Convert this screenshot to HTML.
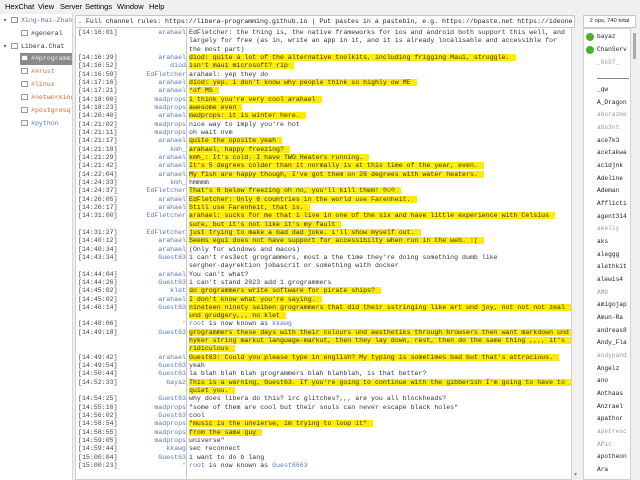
<!DOCTYPE html>
<html><head><meta charset="utf-8"><style>
*{margin:0;padding:0;box-sizing:border-box}
body{width:640px;height:480px;overflow:hidden;background:#f0f0f0;font-family:"Liberation Sans",sans-serif;position:relative}
.menu{position:absolute;top:0;left:0;height:14px;width:640px;font-size:7.5px;color:#000}
.menu span{position:absolute;top:2px}
.tree{position:absolute;left:0;top:14px;width:73px;height:466px;background:#fff;border-right:1px solid #d8d8d8;font-family:"Liberation Mono",monospace;font-size:6.6px;overflow:hidden}
.ti{position:absolute;height:12px;line-height:12px;white-space:nowrap}
.ic{display:inline-block;width:7px;height:6px;border:1px solid #999;vertical-align:middle;margin-right:3px;background:#fafafa}
.topic{position:absolute;left:75px;top:15px;width:500px;height:13px;background:#fff;border:1px solid #c8c8c8;font-family:"Liberation Mono",monospace;font-size:6.6px;line-height:11px;padding-left:2px;white-space:nowrap;overflow:hidden;color:#222}
.ops{position:absolute;left:583px;top:15px;width:53px;height:13px;background:#fff;border:1px solid #c8c8c8;font-size:5.8px;line-height:11px;text-align:center;color:#222}
.chat{position:absolute;left:75px;top:28px;width:497px;height:452px;background:#fff;border:1px solid #d0d0d0;border-top:none;font-family:"Liberation Mono",monospace;font-size:6.6px;color:#333;overflow:hidden}
.sep{position:absolute;left:110px;top:0;width:1px;height:452px;background:#c8c8c8}
.rows{position:absolute;left:0;top:1px;width:497px}
.r{height:8.33px;line-height:8.33px;white-space:nowrap;position:relative}
.t{position:absolute;left:2px;color:#444}
.n{position:absolute;right:387px;color:#5a78b0;text-align:right}
.m{position:absolute;left:113px}
.h{background:#ffec00;padding-right:6px}
.b{color:#5a78b0}
.vs{position:absolute;left:572px;top:28px;width:10px;height:452px;background:#f0f0f0}
.users{position:absolute;left:583px;top:28px;width:48px;height:452px;background:#fff;border:1px solid #d0d0d0;font-family:"Liberation Mono",monospace;font-size:6.2px;color:#222;overflow:hidden}
.u{position:absolute;left:13px;white-space:nowrap}
.g{color:#999}
.dot{position:absolute;left:2px;width:8px;height:8px;border-radius:50%;background:#4caf2a}
.us{position:absolute;left:631px;top:28px;width:9px;height:452px;background:#f0f0f0}
</style></head><body>
<div class="menu"><span style="left:5px">HexChat</span><span style="left:38px">View</span><span style="left:60px">Server</span><span style="left:85px">Settings</span><span style="left:117px">Window</span><span style="left:149px">Help</span></div>
<div class="tree">
<div class="ti" style="top:1px;left:3px;color:#5a78b0"><span style="color:#444">▾ </span><span class="ic"></span>Xing-Hai-Zhang</div>
<div class="ti" style="top:14px;left:21px;color:#333"><span class="ic"></span>#general</div>
<div class="ti" style="top:27px;left:3px;color:#333"><span style="color:#444">▾ </span><span class="ic"></span>Libera.Chat</div>
<div class="ti" style="top:39px;left:20px;width:53px;background:#8a8a8a;color:#eee;padding-left:1px"><span class="ic"></span>##programming</div>
<div class="ti" style="top:52px;left:21px;color:#d06a30"><span class="ic"></span>##rust</div>
<div class="ti" style="top:65px;left:21px;color:#d06a30"><span class="ic"></span>#linux</div>
<div class="ti" style="top:78px;left:21px;color:#d06a30"><span class="ic"></span>#networking</div>
<div class="ti" style="top:91px;left:21px;color:#d06a30"><span class="ic"></span>#postgresql</div>
<div class="ti" style="top:104px;left:21px;color:#5a78b0"><span class="ic"></span>#python</div>
</div>
<div class="topic">. Full channel rules: https://libera-programming.github.io | Put pastes in a pastebin, e.g. https://bpaste.net https://ideone.com</div>
<div class="ops">2 ops, 740 total</div>
<div class="chat"><div class="sep"></div><div class="rows">
<div class="r"><span class="t">[14:16:01]</span><span class="n">arahael</span><span class="m">EdFletcher: the thing is, the native frameworks for ios and android both support this well, and</span></div>
<div class="r"><span class="m">largely for free (as in, write an app in it, and it is already localisable and accessible for</span></div>
<div class="r"><span class="m">the most part)</span></div>
<div class="r"><span class="t">[14:16:39]</span><span class="n">arahael</span><span class="m"><span class="h">diod: quite a lot of the alternative toolkits, including frigging Maui, struggle.</span></span></div>
<div class="r"><span class="t">[14:16:52]</span><span class="n">diod</span><span class="m"><span class="h">isn't maui microsoft? rip</span></span></div>
<div class="r"><span class="t">[14:16:59]</span><span class="n">EdFletcher</span><span class="m">arahael: yep they do</span></div>
<div class="r"><span class="t">[14:17:16]</span><span class="n">arahael</span><span class="m"><span class="h">diod: yep. i don't know why people think so highly ow ME</span></span></div>
<div class="r"><span class="t">[14:17:21]</span><span class="n">arahael</span><span class="m"><span class="h">*of MS</span></span></div>
<div class="r"><span class="t">[14:18:00]</span><span class="n">madprops</span><span class="m"><span class="h">i think you're very cool arahael</span></span></div>
<div class="r"><span class="t">[14:18:23]</span><span class="n">madprops</span><span class="m"><span class="h">awesome even</span></span></div>
<div class="r"><span class="t">[14:20:40]</span><span class="n">arahael</span><span class="m"><span class="h">madprops: it is winter here.</span></span></div>
<div class="r"><span class="t">[14:21:02]</span><span class="n">madprops</span><span class="m">nice way to imply you're hot</span></div>
<div class="r"><span class="t">[14:21:11]</span><span class="n">madprops</span><span class="m">oh wait nvm</span></div>
<div class="r"><span class="t">[14:21:17]</span><span class="n">arahael</span><span class="m"><span class="h">quite the oposite yeah</span></span></div>
<div class="r"><span class="t">[14:21:18]</span><span class="n">kmh_</span><span class="m"><span class="h">arahael,  happy freezing?</span></span></div>
<div class="r"><span class="t">[14:21:29]</span><span class="n">arahael</span><span class="m"><span class="h">kmh_: It's cold. I have TWO Heaters running.</span></span></div>
<div class="r"><span class="t">[14:21:42]</span><span class="n">arahael</span><span class="m"><span class="h">It's 5 degrees colder than it normally is at this time of the year, even.</span></span></div>
<div class="r"><span class="t">[14:22:04]</span><span class="n">arahael</span><span class="m"><span class="h">My fish are happy though, I've got them on 26 degrees with water heaters.</span></span></div>
<div class="r"><span class="t">[14:24:33]</span><span class="n">kmh_</span><span class="m">hmmmm</span></div>
<div class="r"><span class="t">[14:24:37]</span><span class="n">EdFletcher</span><span class="m"><span class="h">That's 6 below freezing oh no, you'll kill them! ☹☺☹</span></span></div>
<div class="r"><span class="t">[14:26:05]</span><span class="n">arahael</span><span class="m"><span class="h">EdFletcher: Only 6 countries in the world use Farenheit.</span></span></div>
<div class="r"><span class="t">[14:26:17]</span><span class="n">arahael</span><span class="m"><span class="h">Still use Farenheit, that is.</span></span></div>
<div class="r"><span class="t">[14:31:00]</span><span class="n">EdFletcher</span><span class="m"><span class="h">arahael: sucks for me that i live in one of the six and have little experience with Celsius</span></span></div>
<div class="r"><span class="m"><span class="h">sure, but it's not like it's my fault</span></span></div>
<div class="r"><span class="t">[14:31:27]</span><span class="n">EdFletcher</span><span class="m"><span class="h">just trying to make a bad dad joke. i'll show myself out.</span></span></div>
<div class="r"><span class="t">[14:40:12]</span><span class="n">arahael</span><span class="m"><span class="h">Seems egui does not have support for accessibilty when run in the web. :(</span></span></div>
<div class="r"><span class="t">[14:40:34]</span><span class="n">arahael</span><span class="m">(Only for windows and macos)</span></div>
<div class="r"><span class="t">[14:43:34]</span><span class="n">Guest63</span><span class="m">i can't res3ect grogrammers, most a the time they're doing something dumb like</span></div>
<div class="r"><span class="m">sergher-dayrektion jobascrit or something with docker</span></div>
<div class="r"><span class="t">[14:44:04]</span><span class="n">arahael</span><span class="m">You can't what?</span></div>
<div class="r"><span class="t">[14:44:26]</span><span class="n">Guest63</span><span class="m">i can't stand 2023 add 1 grogrammers</span></div>
<div class="r"><span class="t">[14:45:02]</span><span class="n">klet</span><span class="m"><span class="h">do grogrammers write software for pirate ships?</span></span></div>
<div class="r"><span class="t">[14:45:02]</span><span class="n">arahael</span><span class="m"><span class="h">I don't know what you're saying.</span></span></div>
<div class="r"><span class="t">[14:46:14]</span><span class="n">Guest63</span><span class="m"><span class="h"> nineteen ninety seiben grogrammers that did their sstringing like art und joy, not not not zeal</span></span></div>
<div class="r"><span class="m"><span class="h">und grudgery,,, no klet</span></span></div>
<div class="r"><span class="t">[14:48:06]</span><span class="n" style="color:#e0a040">*</span><span class="m"><span class="b">root</span> is now known as <span class="b">kkawg</span></span></div>
<div class="r"><span class="t">[14:49:18]</span><span class="n">Guest63</span><span class="m"><span class="h">grogrammers these days with their colours und aesthetiks through browsers then want markdown und</span></span></div>
<div class="r"><span class="m"><span class="h">hyker string markut language-markut, then they lay down, rest, then do the same thing ,,,, it's</span></span></div>
<div class="r"><span class="m"><span class="h">ridiculous</span></span></div>
<div class="r"><span class="t">[14:49:42]</span><span class="n">arahael</span><span class="m"><span class="h">Guest63: Could you please type in english?  My typing is sometimes bad but that's attrocious.</span></span></div>
<div class="r"><span class="t">[14:49:54]</span><span class="n">Guest63</span><span class="m">yeah</span></div>
<div class="r"><span class="t">[14:50:44]</span><span class="n">Guest63</span><span class="m">la blah blah blah grogrammers blah blahblah, is that better?</span></div>
<div class="r"><span class="t">[14:52:33]</span><span class="n">bayaz</span><span class="m"><span class="h">This is a warning, Guest63. If you're going to continue with the gibberish I'm going to have to</span></span></div>
<div class="r"><span class="m"><span class="h">quiet you.</span></span></div>
<div class="r"><span class="t">[14:54:25]</span><span class="n">Guest63</span><span class="m">why does libera do this? irc glitches?,,, are you all blockheads?</span></div>
<div class="r"><span class="t">[14:55:16]</span><span class="n">madprops</span><span class="m">"some of them are cool but their souls can never escape black holes"</span></div>
<div class="r"><span class="t">[14:56:02]</span><span class="n">Guest63</span><span class="m">cool</span></div>
<div class="r"><span class="t">[14:58:54]</span><span class="n">madprops</span><span class="m"><span class="h">"music is the unvierse, im trying to loop it"</span></span></div>
<div class="r"><span class="t">[14:58:55]</span><span class="n">madprops</span><span class="m"><span class="h">from the same guy</span></span></div>
<div class="r"><span class="t">[14:59:05]</span><span class="n">madprops</span><span class="m">universe"</span></div>
<div class="r"><span class="t">[14:59:44]</span><span class="n">kkawg</span><span class="m">sec reconnect</span></div>
<div class="r"><span class="t">[15:00:04]</span><span class="n">Guest63</span><span class="m">i want to do b lang</span></div>
<div class="r"><span class="t">[15:00:23]</span><span class="n" style="color:#e0a040">*</span><span class="m"><span class="b">root</span> is now known as <span class="b">Guest8663</span></span></div>
</div></div>
<div class="vs"><div style="position:absolute;left:2px;bottom:2px;font-size:6px;color:#888">▾</div></div>
<div class="users">
<div class="dot" style="top:4px"></div><div class="u" style="top:4px">bayaz</div>
<div class="dot" style="top:17px"></div><div class="u" style="top:17px">ChanServ</div>
<div class="u g" style="top:30px">_0x07_</div>
<div class="u" style="top:57px">_qw</div>
<div style="position:absolute;left:13px;top:49px;width:32px;height:1px;background:#888"></div>
<div class="u" style="top:70px">A_Dragon</div>
<div class="u g" style="top:82px">aborazme</div>
<div class="u g" style="top:95px">abs3nt</div>
<div class="u" style="top:108px">ace7k3</div>
<div class="u" style="top:120px">acetakwa</div>
<div class="u" style="top:133px">acidjnk</div>
<div class="u" style="top:146px">Adeline</div>
<div class="u" style="top:158px">Ademan</div>
<div class="u" style="top:171px">Afflicti</div>
<div class="u" style="top:184px">agent314</div>
<div class="u g" style="top:196px">akelly</div>
<div class="u" style="top:209px">aks</div>
<div class="u" style="top:222px">aleggg</div>
<div class="u" style="top:234px">alethkit</div>
<div class="u" style="top:247px">alewis4</div>
<div class="u g" style="top:260px">AMG</div>
<div class="u" style="top:272px">amigojap</div>
<div class="u" style="top:285px">Amun-Ra</div>
<div class="u" style="top:298px">andreas8</div>
<div class="u" style="top:310px">Andy_Fla</div>
<div class="u g" style="top:323px">andypand</div>
<div class="u" style="top:336px">Angelz</div>
<div class="u" style="top:348px">ano</div>
<div class="u" style="top:361px">Anthaas</div>
<div class="u" style="top:374px">Anzrael</div>
<div class="u" style="top:386px">apathor</div>
<div class="u g" style="top:399px">apetresc</div>
<div class="u g" style="top:412px">APic</div>
<div class="u" style="top:424px">apotheon</div>
<div class="u" style="top:437px">Ara</div>
</div>
<div class="us"><div style="position:absolute;left:2px;top:5px;width:3px;height:26px;background:#aaa"></div></div>
</body></html>
